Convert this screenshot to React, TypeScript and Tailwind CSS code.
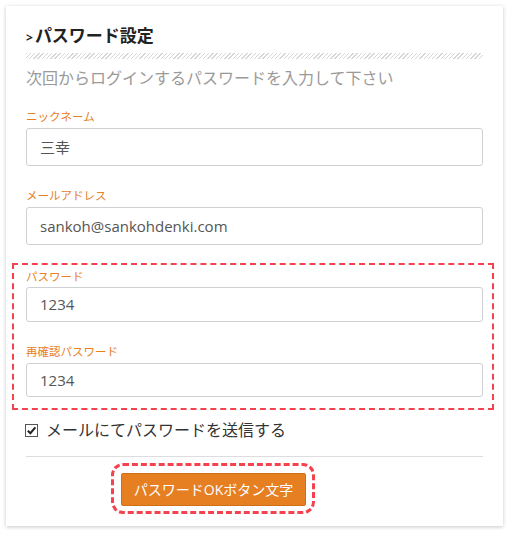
import React from 'react';

const jp = "font-['Open_Sans','Noto_Sans_CJK_JP',sans-serif]";

type FieldProps = {
  label: string;
  value: string;
  labelTop: string;
  inputTop: string;
  height: string;
};

const Field = ({ label, value, labelTop, inputTop, height }: FieldProps) => (
  <div>
    <div className={`${labelTop} h-[16px] leading-[16px] text-[11.5px] text-[#e8801f]`}>{label}</div>
    <div
      className={`${inputTop} ${height} flex items-center rounded-[3px] border border-[#cfcfd4] bg-white pl-[13px] text-[15px] text-[#555]`}
    >
      {value}
    </div>
  </div>
);

export default function App() {
  return (
    <div className={`min-h-screen bg-white pt-[6px] ${jp}`}>
      <div className="mx-[6px] w-[497px] bg-white px-[20px] pb-[12px] pt-[18px] shadow-[0_1px_4px_rgba(0,0,0,0.22)]">
        {/* Heading */}
        <h2 className="h-[24px] text-[17px] font-bold leading-[24px] text-[#222]">
          <span className="mr-[2px] text-[12px]">&gt;</span>パスワード設定
        </h2>
        <div className="mt-[5px] h-[6px] bg-[repeating-linear-gradient(135deg,#d6d6d6_0,#d6d6d6_1px,transparent_1px,transparent_3px)]" />
        <p className="mt-[7px] h-[24px] text-[16px] leading-[24px] text-[#9a9a9a]">
          次回からログインするパスワードを入力して下さい
        </p>

        <Field label="ニックネーム" value="三幸" labelTop="mt-[19px]" inputTop="mt-[3px]" height="h-[38px]" />
        <Field
          label="メールアドレス"
          value="sankoh@sankohdenki.com"
          labelTop="mt-[22px]"
          inputTop="mt-[3px]"
          height="h-[38px]"
        />

        {/* Password group */}
        <div className="-ml-[14px] -mr-[11px] mt-[18px] border-2 border-dashed border-[#f4434f] pb-[11px] pl-[12px] pr-[9px] pt-[4px]">
          <Field label="パスワード" value="1234" labelTop="" inputTop="mt-[2px]" height="h-[35px]" />
          <Field label="再確認パスワード" value="1234" labelTop="mt-[22px]" inputTop="mt-[3px]" height="h-[34px]" />
        </div>

        <label className="mt-[8px] flex h-[24px] items-center gap-[8px] text-[16px] leading-[24px] text-[#333]">
          <span className="ml-[-1px] flex h-[13px] w-[13px] items-center justify-center border border-[#555] bg-white">
            <svg width="11" height="11" viewBox="0 0 12 12">
              <path d="M2 6.2 L4.8 9 L10.2 2.6" fill="none" stroke="#222" strokeWidth="2.2" />
            </svg>
          </span>
          メールにてパスワードを送信する
        </label>

        <div className="mt-[14px] h-px bg-[#ddd]" />

        <div className="ml-[85px] mt-[6px] inline-block rounded-[12px] border-[3px] border-dashed border-[#f4434f] pb-[5px] pl-[7px] pr-[6px] pt-[7px]">
          <button className="flex h-[33px] w-[185px] items-center justify-center rounded-[2px] border border-[#cf6f16] bg-[#e67e22] text-[14px] text-white">
            パスワードOKボタン文字
          </button>
        </div>
      </div>
    </div>
  );
}
